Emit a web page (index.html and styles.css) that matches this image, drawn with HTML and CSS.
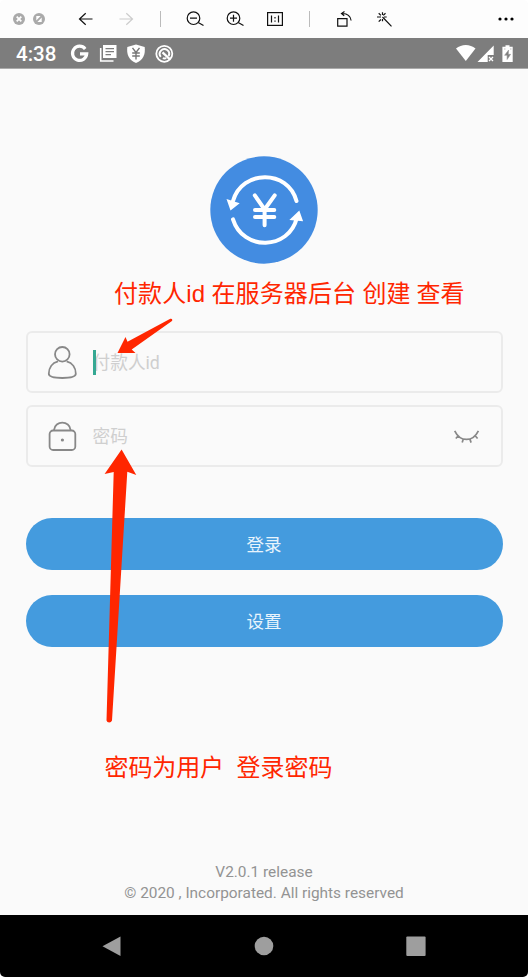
FILE: index.html
```html
<!DOCTYPE html>
<html lang="zh-CN">
<head>
<meta charset="utf-8">
<title>登录</title>
<link rel="stylesheet" href="styles.css">
</head>
<body>
<div class="window">
  <header class="toolbar">
    <div class="controls">
      <svg width="20" height="38" viewBox="9 0 20 38"><circle cx="19" cy="19" r="6" fill="#aaa"/><path d="M16.7 16.7l4.6 4.6m0-4.6l-4.6 4.6" stroke="#fff" stroke-width="1.8"/></svg>
      <svg width="20" height="38" viewBox="29 0 20 38"><circle cx="39" cy="19" r="6" fill="#aaa"/><path d="M36.300 16.100h4.300l-4.300 4.300zM41.700 21.900h-4.300l4.300-4.300z" fill="#fff"/></svg>
    </div>
    <svg class="icon" viewBox="66 0 40 38"><path d="M92.5 19H79.7m6-5.7L79.5 19l6.2 5.7"/></svg>
    <svg class="icon disabled" viewBox="106 0 40 38"><path d="M119.5 19h12.8m-6-5.7 6.2 5.7-6.2 5.7"/></svg>
    <span class="separator"></span>
    <svg class="icon" viewBox="175 0 40 38"><circle cx="193.5" cy="18.2" r="6.3"/><path d="M190 18.2h7m1.2 4.2 5.3 3"/></svg>
    <svg class="icon" viewBox="215 0 40 38"><circle cx="233.5" cy="18.2" r="6.3"/><path d="M230 18.2h7m-3.5-3.5v7m4.7.7 5.3 3"/></svg>
    <svg class="icon" viewBox="255 0 40 38"><rect x="267.6" y="12.6" width="14.8" height="12.8"/><path d="M271.5 15.5v7m7-7v7m-3.5-5.5v1.4m0 2v1.4"/></svg>
    <span class="separator"></span>
    <svg class="icon" viewBox="324 0 40 38"><path d="M337.7 18.6h9.3v7.6h-9.3zM342 13.5c5-.2 8.300 2 9.100 7m-6.600-9-3 2 2.700 2.300"/></svg>
    <svg class="icon" viewBox="364 0 40 38"><path d="M382.500 17 391.500 26.300M377 17h4m3 0h2.700m-4.200-4.700v2.600m0 4v2.400m-3.800-8 2.200 2.100m4.600-2.100-2.200 2.100m-4.600 6.300 2.200-2.200"/></svg>
    <svg class="icon more" viewBox="486 0 40 38"><circle cx="500" cy="19" r="1.600"/><circle cx="506" cy="19" r="1.600"/><circle cx="512" cy="19" r="1.600"/></svg>
  </header>

  <div class="status">
    <span class="clock">4:38</span>
    <svg class="notices" width="110" height="31" viewBox="67 38 110 31">
      <path d="M85.200 48.900A7.100 7.100 0 1 0 86.700 53.900H80" fill="none" stroke="#fff" stroke-width="3.200"/>
      <path d="M103 45h13.500v13H103z" fill="#fff"/><path d="M100.700 48v13h12.800" fill="none" stroke="#fff" stroke-width="1.600"/><path d="M105.500 48.700h8.500m-8.500 3h8.500m-8.500 3h5.500" stroke="#7d7d7d" stroke-width="1.300"/>
      <path d="M136 44.500l8.700 2.500c.8 7-1.200 13.300-8.700 16-7.500-2.700-9.500-9-8.700-16z" fill="#fff"/><path d="M132.500 47.800l3.500 4.700 3.500-4.700M132.200 53h7.600m-7.600 3h7.600m-3.800-3.500v7" fill="none" stroke="#777" stroke-width="1.400"/>
      <circle cx="164.300" cy="53.800" r="8" fill="none" stroke="#fff" stroke-width="1.800"/><path d="M160.800 56.800a4.700 4.700 0 1 1 7.800-.8M166.300 58.100a4.700 4.700 0 0 1-3.500 0" fill="none" stroke="#fff" stroke-width="2"/><path d="M162.500 52.300l7.500 7" stroke="#fff" stroke-width="2.300"/>
    </svg>
    <svg class="signals" width="60" height="31" viewBox="454 38 60 31" fill="#fff">
      <path d="M456 48.500c5.500-4.700 14-4.700 19.500 0L465.800 61z"/>
      <path d="M493.700 45.500V55h-6v7h-10.200z"/><path d="M489 57l4 4m0-4-4 4" stroke="#fff" stroke-width="1.300"/>
      <path d="M505.500 45.200h4v1.600h3.200V62h-10.300V46.800h3.100z"/><path d="M508.600 50l-4 5.300h2.500v4.200l3.500-5.200h-2.300zM504 49h1.500m4.500 0h1.500" fill="#7d7d7d" stroke="#999" stroke-width=".6"/>
    </svg>
  </div>

  <main class="screen">
    <svg class="logo" width="108" height="108" viewBox="210 156 108 108">
      <circle cx="264" cy="210" r="53.700" fill="#438ce1"/>
      <g fill="none" stroke="#fff" stroke-width="4" stroke-linecap="round">
        <path d="M233 201C242 169.500 288 169 296.500 201"/>
        <path d="M233 219.300C243 251.500 289 250 296.800 218"/>
        <path d="M254.800 195.300l9.800 14.200 10.100-14.200M255 210.100h19.300M255 216.900h19.300M264.600 210v15.200"/>
      </g>
      <path d="M226.500 199l13.200 4.200-9.200 7.300zM299.300 210.500l3.800 10.800-13.800-1.300z" fill="#fff"/>
    </svg>

    <form class="login">
      <label class="field">
        <svg class="field-icon" width="32" height="36" viewBox="46 343 32 36"><circle cx="62.300" cy="353.300" r="7.300"/><path d="M58 360.300c-6 1.500-9.200 6.700-9.200 12.500 0 3 4 4.200 13.500 4.200s13.500-1.200 13.500-4.200c0-5.800-3.200-11-9.200-12.500"/></svg>
        <span class="placeholder focused">付款人id</span>
      </label>
      <label class="field">
        <svg class="field-icon" width="32" height="36" viewBox="46 418 32 36"><rect x="49.600" y="430.500" width="25.700" height="19.500" rx="3.500"/><path d="M54 430c.8-9.800 15.800-9.800 16.600 0"/><circle cx="62.400" cy="440" r="1.600" fill="#888" stroke="none"/></svg>
        <span class="placeholder">密码</span>
        <svg class="eye" width="28" height="16" viewBox="453 427 28 16"><path d="M454.700 429.800c5.500 11.500 18 11.500 23.700 0M458.500 434.500l-2.700 3m7.500.600-1.100 3.500m7.700-3.500 1.200 3.500m3.800-7.100 2.700 3"/></svg>
      </label>
      <button class="action first" type="button">登录</button>
      <button class="action" type="button">设置</button>
    </form>

    <footer class="legal">
      <div class="version">V2.0.1 release</div>
      <div class="rights">© 2020 , Incorporated. All rights reserved</div>
    </footer>
  </main>

  <nav class="navigation">
    <svg width="152" height="62" viewBox="34 915 152 62"><path d="M118.500 936.500v19.500L100.500 946.200z"/></svg>
    <svg width="152" height="62" viewBox="188 915 152 62"><circle cx="264" cy="946" r="9.300"/></svg>
    <svg width="152" height="62" viewBox="340 915 152 62"><rect x="406.300" y="936.500" width="19.300" height="19.500" rx="1"/></svg>
  </nav>

  <svg class="annotations" width="528" height="977" viewBox="0 0 528 977">
    <text x="114" y="301.500" textLength="91">付款人id</text>
    <text x="211.500" y="301.500" textLength="144.500">在服务器后台</text>
    <text x="362.500" y="301.500" textLength="48">创建</text>
    <text x="416.500" y="301.500" textLength="48">查看</text>
    <text x="104.500" y="775.500" textLength="119.500">密码为用户</text>
    <text x="236.500" y="775.500" textLength="96">登录密码</text>
    <path d="M170.300 318.700q2-.3 2 1.300 0 .8-.7 1.300L131.700 349.500l3.800 3.500H117.500L125.500 337l2 4.700z"/>
    <path d="M121.600 449.500L136.300 475l-9-3.200-15.300 248.700q-.7 2-2.800 2t-2.700-2L113.700 472l-9.100 2z"/>
  </svg>
</div>
</body>
</html>
```
FILE: styles.css
```css
* { box-sizing: border-box; }

body {
  margin: 0;
  background: #fff;
  font-family: Roboto, "Noto Sans CJK SC", sans-serif;
}

.window {
  position: relative;
  display: flex;
  flex-direction: column;
  width: 528px;
  height: 977px;
  overflow: hidden;
  border-radius: 5px;
  background: #fafafa;
}

svg { display: block; flex: none; }

.toolbar {
  display: flex;
  align-items: center;
  height: 38px;
  padding: 0 2px 0 9px;
  background: #fdfdfd;
}

.controls { display: flex; margin-right: 17px; }

.icon {
  width: 40px;
  height: 38px;
  fill: none;
  stroke: #111;
  stroke-width: 1.2;
}

.icon.disabled { stroke: #ccc; }
.icon.more { margin-left: auto; fill: #000; stroke: none; }

.separator {
  width: 1px;
  height: 16px;
  margin: 0 14px;
  background: #bbb;
}

.status {
  display: flex;
  align-items: center;
  height: 31px;
  padding: 0 14px 0 16px;
  background: #7d7d7d;
  border-bottom: 1px solid #aaa;
}

.clock {
  width: 51px;
  padding-top: 1px;
  color: #fff;
  font-size: 20.5px;
  font-weight: 500;
  line-height: 30px;
}

.signals { margin-left: auto; }

.screen {
  display: flex;
  flex: 1;
  flex-direction: column;
  align-items: center;
  padding-top: 87px;
}

.login {
  display: flex;
  flex-direction: column;
  width: 477px;
  margin-top: 67px;
}

.field {
  display: flex;
  align-items: center;
  height: 62px;
  margin-bottom: 12px;
  padding: 0 20px 0 18px;
  border: 2px solid #ebebeb;
  border-radius: 6px;
}

.field-icon, .eye {
  fill: none;
  stroke: #888;
  stroke-width: 1.8;
}

.eye { margin-left: auto; stroke-width: 1.7; }

.placeholder {
  margin-left: 15px;
  padding-top: 1px;
  color: #cfcfcf;
  font-size: 17.7px;
  line-height: 26px;
}

.focused { position: relative; }

.focused::before {
  content: "";
  position: absolute;
  top: 1px;
  left: 0;
  width: 3px;
  height: 25px;
  background: #35a893;
}

.action {
  height: 52px;
  margin: 0 0 25px;
  padding: 2px 0 0;
  border: 0;
  border-radius: 26px;
  background: #449bde;
  color: #e8f4fc;
  font: 17.5px/50px Roboto, "Noto Sans CJK SC", sans-serif;
}

.action.first { margin-top: 39px; }

.legal {
  margin: auto 0 11px;
  color: #939393;
  font-size: 15.4px;
  line-height: 21px;
  text-align: center;
}

.navigation {
  display: flex;
  justify-content: center;
  height: 62px;
  background: #000;
  fill: #9e9e9e;
}

.annotations {
  position: absolute;
  inset: 0;
  fill: #ff2600;
  font-family: "Liberation Sans", "Noto Sans CJK SC", sans-serif;
  font-size: 24px;
  font-weight: 400;
  pointer-events: none;
}
```
